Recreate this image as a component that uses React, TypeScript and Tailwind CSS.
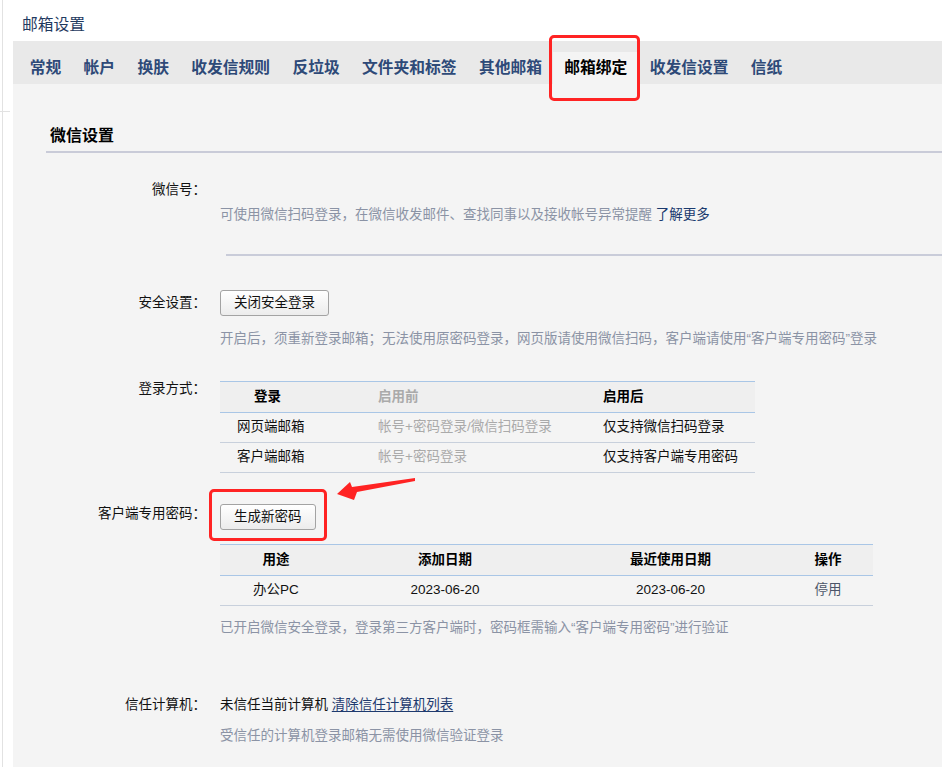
import type { ReactNode } from "react";

const tabs = ["常规", "帐户", "换肤", "收发信规则", "反垃圾", "文件夹和标签", "其他邮箱", "邮箱绑定", "收发信设置", "信纸"];

function Row({ label, children, className = "" }: { label: string; children: ReactNode; className?: string }) {
  return (
    <div className={`flex ${className}`}>
      <div className="w-[160px] shrink-0 text-right leading-[20px] text-[#111]">{label}</div>
      <div className="ml-[14px] flex-1">{children}</div>
    </div>
  );
}

function Btn({ children }: { children: ReactNode }) {
  return (
    <button className="h-[26px] rounded-[3px] border border-[#a3a3a3] bg-gradient-to-b from-white to-[#ececec] px-[13px] leading-[24px] text-[#111]">
      {children}
    </button>
  );
}

export default function App() {
  return (
    <div className="relative flex h-[767px] overflow-hidden bg-white font-['Liberation_Sans','Noto_Sans_CJK_SC',sans-serif] text-[13.5px]">
      {/* left edge strip */}
      <div className="relative w-[13px] shrink-0">
        <div className="ml-[2px] h-full w-px bg-[#e2e2e2]" />
        <div className="absolute left-0 top-[111px] h-px w-[10px] bg-[#e2e2e2]" />
      </div>

      <div className="flex flex-1 flex-col">
        <div className="h-[41px] pl-[9px] pt-[15px] text-[15.75px] leading-[20px] text-[#1f3a60]">邮箱设置</div>

        <div className="flex h-[43px] items-end bg-[#e9e9e9] pl-[5.5px]">
          {tabs.map((t) => (
            <div
              key={t}
              className={`h-[32px] px-[11.2px] text-[15.75px] font-bold leading-[32px] ${
                t === "邮箱绑定" ? "bg-[#f4f4f4] text-black" : "text-[#2e4a78]"
              }`}
            >
              {t}
            </div>
          ))}
        </div>

        <div className="flex-1 bg-[#f4f4f4] pl-[33px]">
          <div className="mt-[40px] border-b-2 border-[#c9cbd8] pb-[3px] pl-[4px] text-[16px] font-bold leading-[24px] text-black">
            微信设置
          </div>

          <Row label="微信号：" className="mt-[27px]">
            <div className="h-[20px]" />
            <p className="mt-[5px] leading-[20px] text-[#8b93a5]">
              可使用微信扫码登录，在微信收发邮件、查找同事以及接收帐号异常提醒 <span className="text-[#1a3a6e]">了解更多</span>
            </p>
            <div className="ml-[6px] mt-[29px] h-[2px] bg-[#c9ccd9]" />
          </Row>

          <Row label="安全设置：" className="mt-[34px] [&>div:first-child]:leading-[26px]">
            <Btn>关闭安全登录</Btn>
            <p className="mt-[13px] leading-[20px] text-[#8b93a5]">
              开启后，须重新登录邮箱；无法使用原密码登录，网页版请使用微信扫码，客户端请使用“客户端专用密码”登录
            </p>
          </Row>

          <Row label="登录方式：" className="mt-[30px]">
            <div className="mt-[2px] w-[535px] border-t border-[#a9c6e6]">
              <div className="flex h-[31px] items-center border-b border-[#a9c6e6] bg-[#efefef] font-bold">
                <div className="w-[158px] pl-[34px] text-black">登录</div>
                <div className="w-[225px] text-[#aaaaaa]">启用前</div>
                <div className="flex-1 text-black">启用后</div>
              </div>
              <div className="flex h-[30px] items-center border-b border-[#c8d0dc]">
                <div className="w-[158px] pl-[17px] text-[#111]">网页端邮箱</div>
                <div className="w-[225px] text-[#aaaaaa]">帐号+密码登录/微信扫码登录</div>
                <div className="flex-1 text-[#111]">仅支持微信扫码登录</div>
              </div>
              <div className="flex h-[30px] items-center border-b border-[#c8d0dc]">
                <div className="w-[158px] pl-[17px] text-[#111]">客户端邮箱</div>
                <div className="w-[225px] text-[#aaaaaa]">帐号+密码登录</div>
                <div className="flex-1 text-[#111]">仅支持客户端专用密码</div>
              </div>
            </div>
          </Row>

          <Row label="客户端专用密码：" className="mt-[31px]">
            <Btn>生成新密码</Btn>
            <div className="mt-[14px] w-[653px] border-t border-[#a9c6e6] text-center">
              <div className="flex h-[31px] items-center border-b border-[#a9c6e6] bg-[#efefef] font-bold text-black">
                <div className="w-[112px]">用途</div>
                <div className="w-[226px]">添加日期</div>
                <div className="w-[225px]">最近使用日期</div>
                <div className="flex-1">操作</div>
              </div>
              <div className="flex h-[30px] items-center border-b border-[#c8d0dc] text-[#111]">
                <div className="w-[112px]">办公PC</div>
                <div className="w-[226px]">2023-06-20</div>
                <div className="w-[225px]">2023-06-20</div>
                <div className="flex-1 text-[#4b5568]">停用</div>
              </div>
            </div>
            <p className="mt-[12px] leading-[20px] text-[#8b93a5]">
              已开启微信安全登录，登录第三方客户端时，密码框需输入“客户端专用密码”进行验证
            </p>
          </Row>

          <Row label="信任计算机：" className="mt-[57px]">
            <p className="leading-[20px] text-[#111]">
              未信任当前计算机 <span className="text-[#1e3a6e] underline underline-offset-2">清除信任计算机列表</span>
            </p>
            <p className="mt-[11px] leading-[20px] text-[#8b93a5]">受信任的计算机登录邮箱无需使用微信验证登录</p>
          </Row>
        </div>
      </div>

      {/* red annotation marks */}
      <div className="absolute left-[549px] top-[35px] h-[66px] w-[91px] rounded-[5px] border-[3px] border-[#ff2323]" />
      <div className="absolute left-[209px] top-[489px] h-[52px] w-[118px] rounded-[5px] border-[3px] border-[#ff2323]" />
      <svg className="absolute left-[330px] top-[472px]" width="90" height="32" viewBox="0 0 90 32">
        <polygon points="7,22 20,10 22,15 85,6 85,9 27,20 24,28" fill="#ff2323" />
      </svg>
    </div>
  );
}
